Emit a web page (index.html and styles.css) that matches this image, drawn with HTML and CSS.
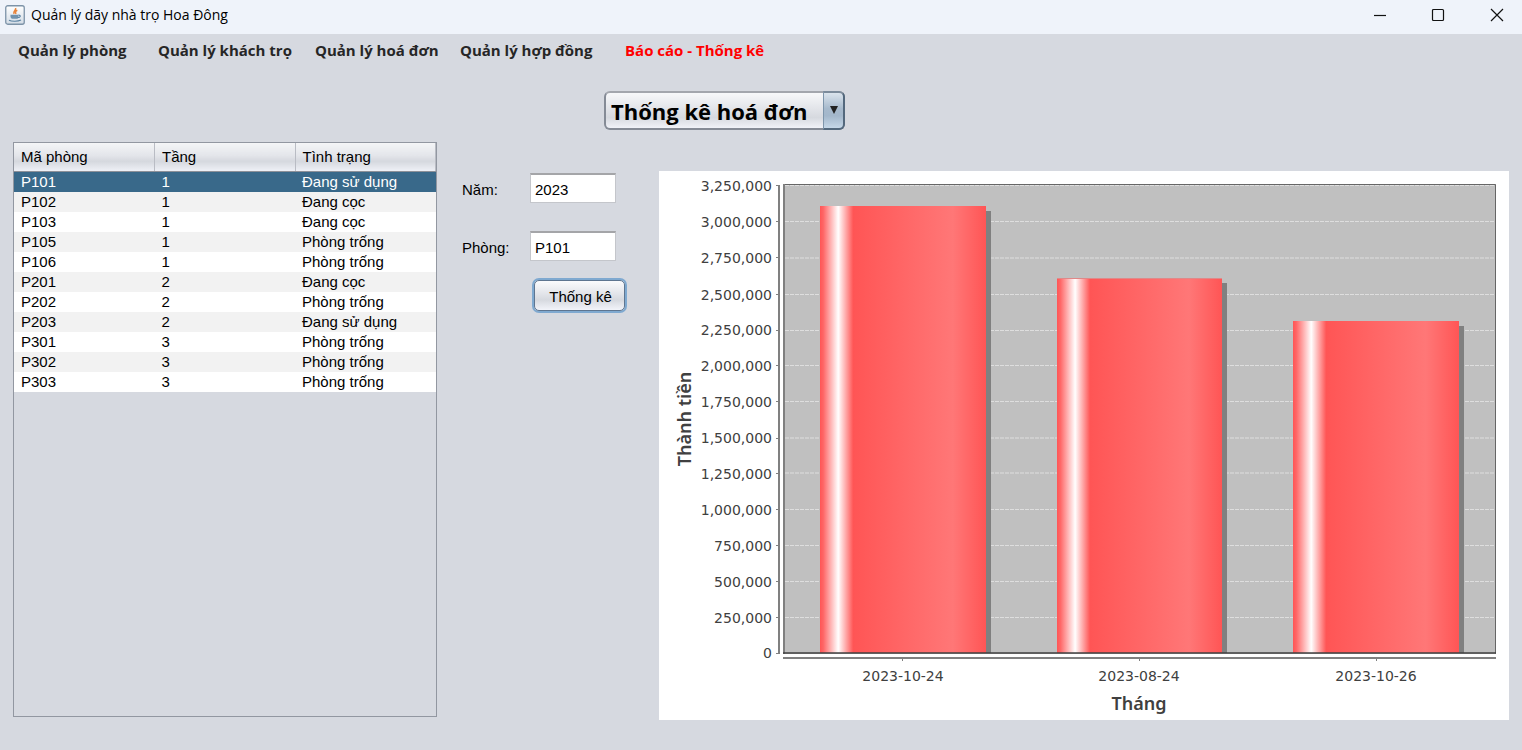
FILE: index.html
```html
<!DOCTYPE html>
<html lang="vi">
<head>
<meta charset="utf-8">
<title>Quản lý dãy nhà trọ Hoa Đông</title>
<link rel="stylesheet" href="styles.css">
</head>
<body>
<header class="titlebar">
  <svg class="app-icon" viewBox="0 0 20 20" aria-hidden="true">
    <defs><linearGradient id="tile" x1="0" y1="0" x2="0" y2="1"><stop offset="0" stop-color="#fff"/><stop offset="1" stop-color="#d3dce6"/></linearGradient></defs>
    <rect x="0.75" y="0.75" width="18.5" height="18.5" rx="2" fill="url(#tile)" stroke="#7d93a8" stroke-width="1.3"/>
    <path d="M10.600 3c1 2.200-3 3-1.600 6M12.300 5.300c-2 .8-2.200 1.700-1.300 3.700" fill="none" stroke="#e8833a" stroke-width="1.500"/>
    <path d="M5.500 9.700h8v1.500c0 2-1 2.600-1.800 2.600h-4c-1 0-2.200-.8-2.200-2.600z" fill="#7192ad"/>
    <path d="M13.500 10.200c2.600-.3 2.300 2.300-.9 2.500M4 15.200c2.500 1.400 9 1.400 12-.2" fill="none" stroke="#5b83a3" stroke-width="1.200"/>
  </svg>
  <h1 class="app-title">Quản lý dãy nhà trọ Hoa Đông</h1>
  <div class="window-buttons">
    <button type="button" class="window-button" aria-label="Thu nhỏ"><svg viewBox="0 0 14 14"><path d="M1 7.500h12"/></svg></button>
    <button type="button" class="window-button" aria-label="Phóng to"><svg viewBox="0 0 14 14"><rect x="1.500" y="1.500" width="11" height="11" rx="1"/></svg></button>
    <button type="button" class="window-button" aria-label="Đóng"><svg viewBox="0 0 14 14"><path d="M1 1l12 12M13 1L1 13"/></svg></button>
  </div>
</header>
<nav class="tabs">
  <a class="tab" href="#phong">Quản lý phòng</a>
  <a class="tab" href="#khach">Quản lý khách trọ</a>
  <a class="tab" href="#hoadon">Quản lý hoá đơn</a>
  <a class="tab" href="#hopdong">Quản lý hợp đồng</a>
  <a class="tab tab-active" href="#baocao" aria-current="page">Báo cáo - Thống kê</a>
</nav>
<div class="report-picker">
  <span class="combo"><select class="combo-select" aria-label="Loại thống kê"><option>Thống kê hoá đơn</option></select></span>
</div>
<main class="content">
  <section class="rooms">
    <table class="room-table">
      <thead><tr><th>Mã phòng</th><th>Tầng</th><th>Tình trạng</th></tr></thead>
      <tbody>
        <tr class="selected"><td>P101</td><td>1</td><td>Đang sử dụng</td></tr>
        <tr><td>P102</td><td>1</td><td>Đang cọc</td></tr>
        <tr><td>P103</td><td>1</td><td>Đang cọc</td></tr>
        <tr><td>P105</td><td>1</td><td>Phòng trống</td></tr>
        <tr><td>P106</td><td>1</td><td>Phòng trống</td></tr>
        <tr><td>P201</td><td>2</td><td>Đang cọc</td></tr>
        <tr><td>P202</td><td>2</td><td>Phòng trống</td></tr>
        <tr><td>P203</td><td>2</td><td>Đang sử dụng</td></tr>
        <tr><td>P301</td><td>3</td><td>Phòng trống</td></tr>
        <tr><td>P302</td><td>3</td><td>Phòng trống</td></tr>
        <tr><td>P303</td><td>3</td><td>Phòng trống</td></tr>
      </tbody>
    </table>
  </section>
  <form class="filter">
    <div class="field"><label for="year">Năm:</label><input id="year" type="text" value="2023"></div>
    <div class="field"><label for="room">Phòng:</label><input id="room" type="text" value="P101"></div>
    <button type="button" class="submit">Thống kê</button>
  </form>
  <figure class="chart">
    <svg viewBox="0 0 850 549" role="img" aria-label="Thành tiền theo tháng">
      <defs>
        <linearGradient id="bar"><stop offset="0" stop-color="#f55"/><stop offset=".02" stop-color="#f66"/><stop offset=".11" stop-color="#fff"/><stop offset=".2" stop-color="#f55"/><stop offset=".8" stop-color="#f77"/><stop offset="1" stop-color="#f55"/></linearGradient>
      </defs>
      <rect x="124" y="13" width="713" height="470" fill="#c0c0c0"/>
      <path class="grid" d="M126 14.500h710M126 50.500h710M126 87h710M126 123.500h710M126 159.500h710M126 194.500h710M126 230.500h710M126 267h710M126 302h710M126 338.500h710M126 374.500h710M126 410.500h710M126 446.500h710"/>
      <g fill="#808080">
        <rect x="166" y="40" width="166" height="442"/><rect x="403" y="112" width="165" height="370"/><rect x="639" y="155" width="166" height="327"/>
      </g>
      <g fill="url(#bar)">
        <rect x="161" y="35" width="166" height="447"/><rect x="398" y="107" width="165" height="375"/><rect x="634" y="150" width="166" height="332"/>
      </g>
      <path d="M398 107.500h165" stroke="#e08888"/>
      <path d="M125 13v470M120 14v469M124 487h713" fill="none" stroke="#808080" stroke-width="2"/>
      <path d="M126 13.500h710.500v469" fill="none" stroke="#666"/>
      <path d="M124 482h713" stroke="#404040" stroke-opacity=".75" stroke-width="2"/>
      <path d="M117 14.500h3M117 50.500h3M117 86.500h3M117 123.500h3M117 159.500h3M117 194.500h3M117 230.500h3M117 267.500h3M117 302.500h3M117 338.500h3M117 374.500h3M117 410.500h3M117 446.500h3M117 482.500h3M243.500 487v3M480.500 487v3M717.500 487v3" stroke="#808080"/>
      <g class="axis-value">
        <text x="113" y="20">3,250,000</text><text x="113" y="56">3,000,000</text><text x="113" y="92">2,750,000</text><text x="113" y="129">2,500,000</text><text x="113" y="164">2,250,000</text><text x="113" y="200">2,000,000</text><text x="113" y="236">1,750,000</text><text x="113" y="272">1,500,000</text><text x="113" y="308">1,250,000</text><text x="113" y="344">1,000,000</text><text x="113" y="380">750,000</text><text x="113" y="416">500,000</text><text x="113" y="452">250,000</text><text x="113" y="487">0</text>
      </g>
      <g class="axis-category"><text x="244" y="510">2023-10-24</text><text x="480" y="510">2023-08-24</text><text x="717" y="510">2023-10-26</text></g>
      <g class="axis-title"><text x="480" y="539">Tháng</text><text transform="translate(32 248) rotate(-90)">Thành tiền</text></g>
    </svg>
  </figure>
</main>
</body>
</html>
```
FILE: styles.css
```css
* { box-sizing: border-box; }
body {
  margin: 0;
  min-height: 100vh;
  display: flex;
  flex-direction: column;
  background: #d6d9e0;
  color: #000;
  font: 15px/20px "Liberation Sans", Arial, sans-serif;
}
.titlebar {
  display: flex;
  align-items: center;
  height: 34px;
  padding: 0 0 4px 5px;
  background: #eff3fa;
}
.app-icon { width: 20px; height: 20px; margin-right: 6px; }
.app-title {
  flex: 1;
  margin: 0;
  font: 14px/20px "Open Sans", "Noto Sans", sans-serif;
}
.window-buttons { display: flex; }
.window-button {
  display: flex;
  align-items: center;
  justify-content: center;
  width: 58px;
  height: 30px;
  padding: 0;
  border: 0;
  background: none;
}
.window-button:last-child { width: 50px; margin-left: 5px; }
.window-button svg { width: 14px; height: 14px; fill: none; stroke: #111; stroke-width: 1.2; }
.tabs {
  display: grid;
  grid-template-columns: 140px 157px 145px 165px 1fr;
  padding: 5px 18px 0;
  font: bold 15px/22px "Open Sans", "Noto Sans", sans-serif;
}
.tab { color: #262626; text-decoration: none; white-space: nowrap; }
.tab-active { color: #f00; }
.report-picker { padding: 30px 0 12px 604px; }
.combo {
  position: relative;
  display: block;
  width: 241px;
  height: 39px;
}
.combo-select {
  appearance: none;
  width: 100%;
  height: 100%;
  padding: 0 28px 0 5px;
  border: 2px solid #858b96;
  border-top-color: #a3a6ad;
  border-radius: 6px;
  background: linear-gradient(#f7f8fa, #e2e4e9 45%, #d6d9df 70%, #f0f2f8);
  color: #000;
  font: bold 22px/32px "Open Sans", "Noto Sans", sans-serif;
}
.combo::before {
  content: "";
  position: absolute;
  top: 0;
  right: 0;
  bottom: 0;
  width: 22px;
  box-sizing: border-box;
  border: 2px solid #53687d;
  border-left: 1px solid #7e95ab;
  border-top-color: #7c8b9b;
  border-radius: 0 6px 6px 0;
  background: linear-gradient(#dbe4ed, #a6b9cc 45%, #a3b7cb 65%, #c5d7e8);
  pointer-events: none;
}
.combo::after {
  content: "";
  position: absolute;
  top: 15px;
  right: 7px;
  border: 4px solid transparent;
  border-top: 8px solid #222;
  border-bottom: 0;
  pointer-events: none;
}
.content {
  flex: 1;
  display: grid;
  grid-template-columns: 424px 222px minmax(0, 1fr);
  padding: 0 13px 30px;
}
.rooms { margin-bottom: 3px; border: 1px solid #9297a1; }
.room-table { width: 100%; border-collapse: collapse; table-layout: fixed; }
.room-table th {
  height: 28px;
  padding: 0 6px 0 7px;
  border-right: 1px solid #b9bcc4;
  border-bottom: 1px solid #8d9199;
  background: linear-gradient(#f4f5f7, #e3e5ea 45%, #d5d8de 65%, #eef0f6);
  font-weight: normal;
  text-align: left;
}
.room-table td { height: 20px; padding: 1px 7px; line-height: 18px; background: #fff; }
.room-table tr:nth-child(even) td { background: #f2f2f2; }
.room-table .selected td { background: #39698a; color: #fff; }
.filter { padding: 31px 0 0 25px; }
.field { display: grid; grid-template-columns: 68px 86px; align-items: center; margin-bottom: 28px; }
.field label { padding-top: 4px; }
.field input {
  width: 100%;
  height: 30px;
  padding: 2px 4px 0;
  border: 1px solid #c4c6cb;
  border-top: 2px solid #a4a5a8;
  background: #fff;
  font: inherit;
}
.submit {
  display: block;
  width: 91px;
  height: 31px;
  margin: -9px 0 0 72px;
  padding: 2px 0 0 2px;
  border: 1px solid #5e7590;
  border-radius: 5px;
  box-shadow: 0 0 0 2px #7fa9d0;
  background: linear-gradient(#fbfbfd, #e2e4e9 45%, #d6d9df 65%, #f2f4fa);
  color: #000;
  font: inherit;
}
.chart { margin: 29px 0 0; background: #fff; align-self: start; }
.chart svg { display: block; width: 100%; height: auto; }
.grid { fill: none; stroke: #dedede; stroke-dasharray: 4 1; }
.chart text { fill: #404040; }
.axis-value, .axis-category { font: 14px "DejaVu Sans", sans-serif; }
.axis-value { text-anchor: end; }
.axis-category { text-anchor: middle; }
.axis-title { font: 600 18px "Noto Sans", sans-serif; text-anchor: middle; }
```
